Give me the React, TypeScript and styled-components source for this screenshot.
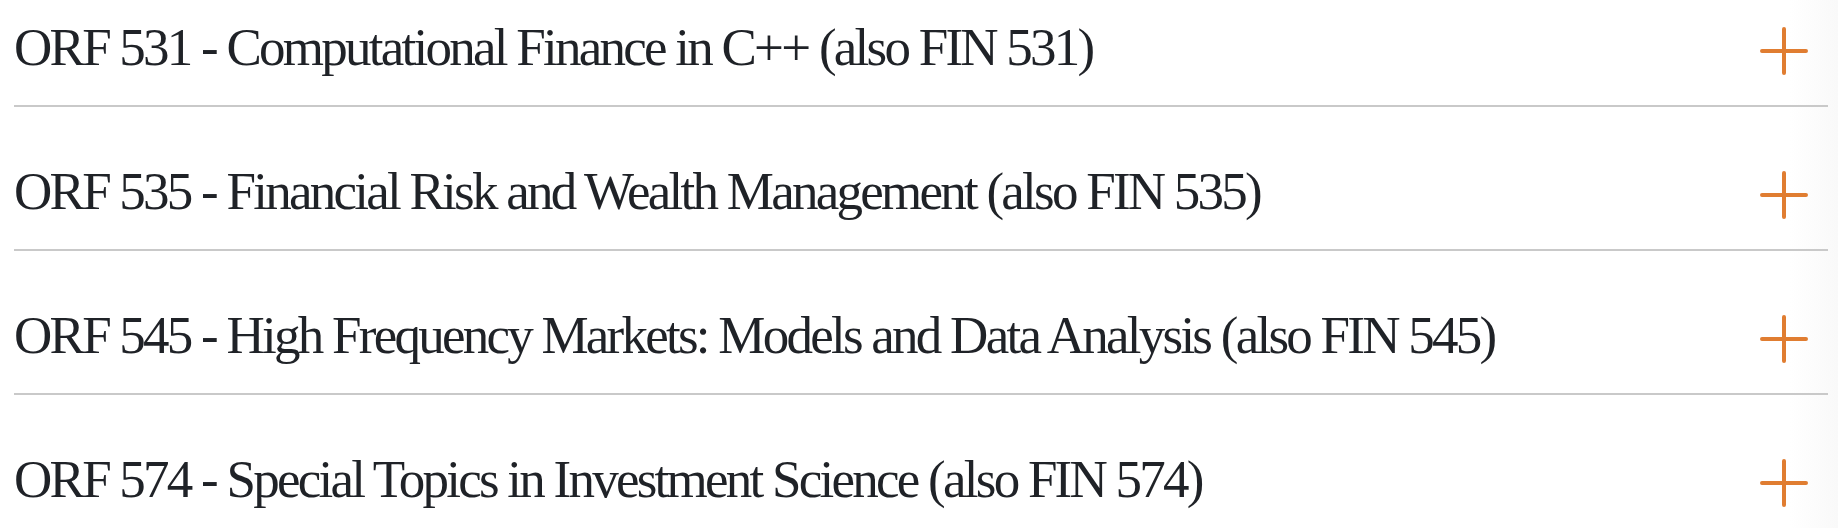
import styled, { createGlobalStyle } from "styled-components";

const courses = [
	"ORF 531 - Computational Finance in C++ (also FIN 531)",
	"ORF 535 - Financial Risk and Wealth Management (also FIN 535)",
	"ORF 545 - High Frequency Markets: Models and Data Analysis (also FIN 545)",
	"ORF 574 - Special Topics in Investment Science (also FIN 574)",
];

export default function App() {
	return (
		<>
			<GlobalStyle />
			<List>
				{courses.map((title) => (
					<Item key={title}>
						<Title>{title}</Title>
						<Toggle aria-label="Expand">
							<svg width="48" height="48" viewBox="0 0 48 48">
								<path d="M24 2v44M2 24h44" stroke="#e07d31" strokeWidth="4" strokeLinecap="round" />
							</svg>
						</Toggle>
					</Item>
				))}
			</List>
		</>
	);
}

const GlobalStyle = createGlobalStyle`
	html, body {
		margin: 0;
		padding: 0;
		background: linear-gradient(to right, #ffffff 0, #ffffff calc(100% - 48px), #f9f9f9 100%);
		min-height: 100%;
	}
	body {
		height: 528px;
		overflow: hidden;
	}
`;

const List = styled.ul`
	list-style: none;
	margin: 0;
	padding: 0 10px 0 14px;
`;

const Item = styled.li`
	display: flex;
	align-items: center;
	justify-content: space-between;
	padding: 58px 0 32px 0;
	border-bottom: 2px solid #c9c9c9;
	&:first-child {
		padding-top: 21px;
	}
	&:last-child {
		border-bottom: none;
	}
`;

const Title = styled.h3`
	margin: 0;
	font-family: "Liberation Serif", "Times New Roman", serif;
	font-weight: 400;
	font-size: 53px;
	line-height: 52px;
	letter-spacing: -2.75px;
	color: #1f2227;
	white-space: nowrap;
`;

const Toggle = styled.button`
	display: flex;
	border: none;
	background: transparent;
	padding: 0;
	margin: 4px 20px -4px 0;
	cursor: pointer;
`;
